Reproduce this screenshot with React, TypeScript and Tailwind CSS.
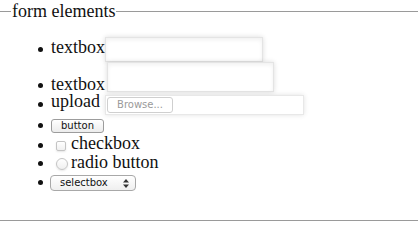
import type { ReactNode } from 'react'

const serifFont = 'font-["Liberation_Serif",serif] text-[18px] text-[#111]'
const serif = `${serifFont} leading-[16px]`
const ui = 'font-["DejaVu_Sans",sans-serif] text-[10px] leading-none'

function Bullet({ top }: { top: number }) {
  return <div className="w-[5px] h-[5px] rounded-full bg-[#111] shrink-0" style={{ marginTop: top }} />
}

function Row({ h, bullet, children }: { h: number; bullet: number; children: ReactNode }) {
  return (
    <li className="flex items-start pl-[38px] gap-[8px]" style={{ height: h }}>
      <Bullet top={bullet} />
      <div className="flex items-start">{children}</div>
    </li>
  )
}

function TextBox({ w, h, mt }: { w: number; h: number; mt: number }) {
  return (
    <div
      className="bg-white border border-[#e4e4e4] shadow-[0_0_5px_rgba(0,0,0,0.14),inset_0_2px_4px_rgba(0,0,0,0.06)]"
      style={{ width: w, height: h, marginTop: mt }}
    />
  )
}

export default function App() {
  return (
    <div className="w-[418px] h-[241px] bg-white overflow-hidden">
      <fieldset className="mt-[1px] border-t border-b border-[#9a9a9a] p-0">
        <legend className={`${serifFont} leading-[20px] ml-[11px] px-[1px]`}>form elements</legend>
        <ul className="pt-[15px] pb-[28px]">
          <Row h={27} bullet={11}>
            <span className={`${serif} w-[54px] mt-[3px]`}>textbox</span>
            <TextBox w={158} h={25} mt={1} />
          </Row>
          <Row h={31} bullet={20}>
            <span className={`${serif} w-[56px] mt-[13px]`}>textbox</span>
            <TextBox w={167} h={30} mt={-1} />
          </Row>
          <Row h={22} bullet={8}>
            <span className={`${serif} w-[54px] -mt-[1px]`}>upload</span>
            <div className="mt-[1px] w-[199px] h-[20px] bg-white border border-[#e8e8e8] shadow-[0_0_5px_rgba(0,0,0,0.12)] pl-px pt-px">
              <div className={`${ui} w-[66px] h-[16px] rounded-[3px] border border-[#cfcfcf] bg-white text-[#9a9a9a] flex items-center justify-center`}>
                Browse...
              </div>
            </div>
          </Row>
          <Row h={20} bullet={7}>
            <button className={`${ui} mt-[3px] w-[53px] h-[14px] rounded-[3px] border border-[#9c9c9c] bg-gradient-to-b from-white to-[#ececec] text-[#111] flex items-center justify-center`}>
              button
            </button>
          </Row>
          <Row h={20} bullet={7}>
            <div className="ml-[5px] mt-[5px] w-[10px] h-[10px] rounded-[2px] border border-[#c4c4c4] bg-gradient-to-b from-white to-[#f0f0f0] shadow-[0_1px_2px_rgba(0,0,0,0.1)]" />
            <span className={`${serif} ml-[5px] -mt-[1px]`}>checkbox</span>
          </Row>
          <Row h={18} bullet={5}>
            <div className="ml-[5px] mt-[2px] w-[12px] h-[12px] rounded-full border border-[#c4c4c4] bg-gradient-to-b from-white to-[#f0f0f0] shadow-[0_1px_2px_rgba(0,0,0,0.1)]" />
            <span className={`${serif} ml-[3px] -mt-[2px]`}>radio button</span>
          </Row>
          <Row h={18} bullet={6}>
            <div className={`${ui} -ml-[1px] mt-[1px] w-[86px] h-[16px] rounded-[4px] border border-[#a8a8a8] bg-gradient-to-b from-white to-[#efefef] text-[#111] flex items-center pl-[9px] pr-[6px] justify-between`}>
              <span>selectbox</span>
              <svg width="6" height="9" viewBox="0 0 6 9">
                <path d="M0 3.5 L3 0 L6 3.5 Z M0 5.5 L3 9 L6 5.5 Z" fill="#333" />
              </svg>
            </div>
          </Row>
        </ul>
      </fieldset>
    </div>
  )
}
